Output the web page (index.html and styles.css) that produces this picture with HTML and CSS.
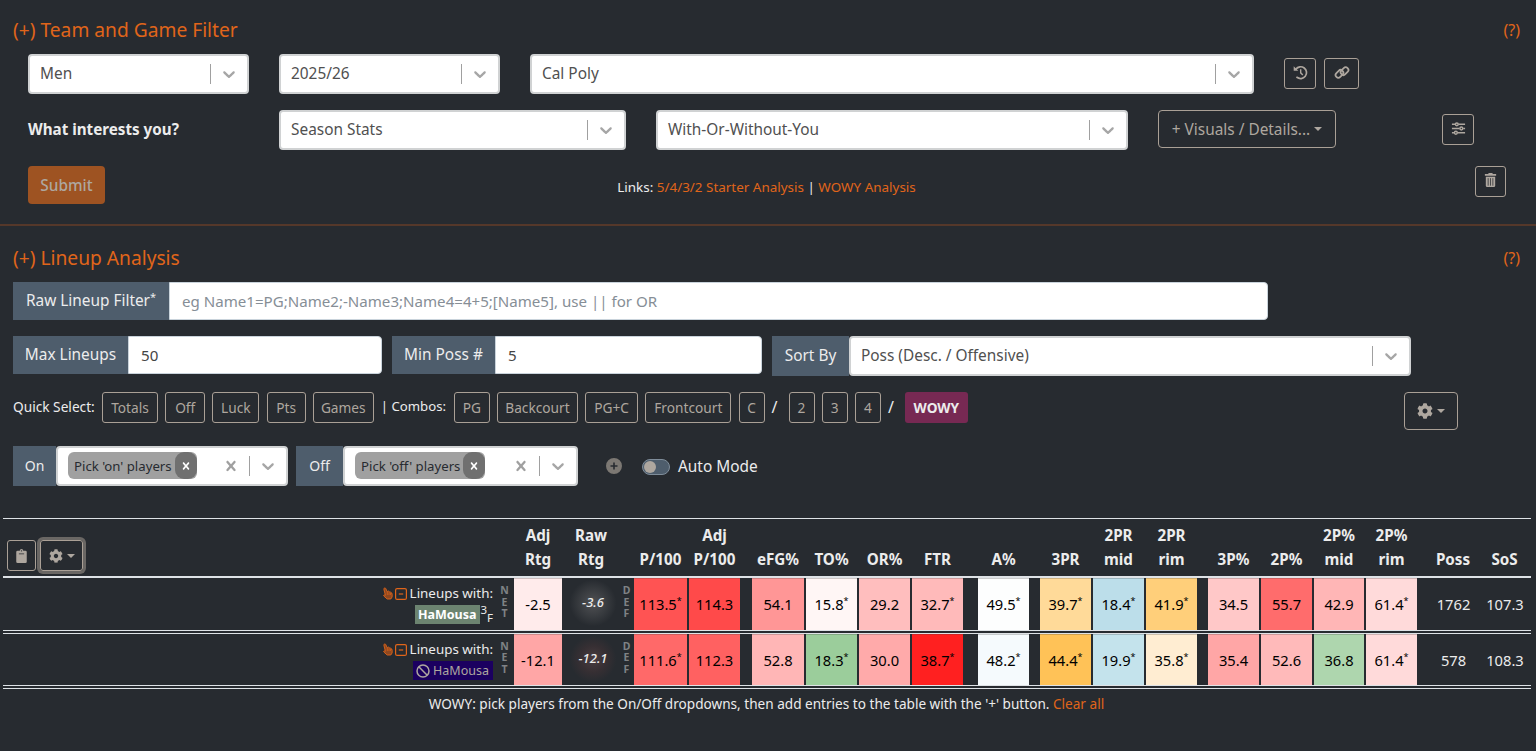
FILE: index.html
```html
<!DOCTYPE html>
<html lang="en">
<head>
  <meta charset="UTF-8" />
  <title>Lineup Analysis</title>
  <meta name="viewport" content="width=device-width, initial-scale=1.0" />
  <link rel="stylesheet" href="styles.css">
</head>
<body>
  <svg class="sprite" aria-hidden="true">
    <symbol id="chevron" viewBox="0 0 20 20"><path d="M4.516 7.548c0.436-0.446 1.043-0.481 1.576 0l3.908 3.747 3.908-3.747c0.533-0.481 1.141-0.446 1.574 0 0.436 0.445 0.408 1.197 0 1.615-0.406 0.418-4.695 4.502-4.695 4.502-0.217 0.223-0.502 0.335-0.787 0.335s-0.57-0.112-0.789-0.335c0 0-4.287-4.084-4.695-4.502s-0.436-1.17 0-1.615z"/></symbol>
    <symbol id="cross" viewBox="0 0 20 20"><path d="M14.348 14.849c-0.469 0.469-1.229 0.469-1.697 0l-2.651-3.030-2.651 3.029c-0.469 0.469-1.229 0.469-1.697 0-0.469-0.469-0.469-1.229 0-1.697l2.758-3.15-2.759-3.152c-0.469-0.469-0.469-1.228 0-1.697s1.228-0.469 1.697 0l2.652 3.031 2.651-3.031c0.469-0.469 1.228-0.469 1.697 0s0.469 1.229 0 1.697l-2.758 3.152 2.758 3.15c0.469 0.469 0.469 1.229 0 1.698z"/></symbol>
    <symbol id="gear" viewBox="0 0 512 512"><path d="M487.4 315.7l-42.6-24.6c4.3-23.2 4.3-47 0-70.2l42.6-24.6c4.9-2.8 7.1-8.6 5.5-14-11.1-35.6-30-67.8-54.7-94.6-3.8-4.1-10-5.1-14.8-2.3L380.8 110c-17.9-15.4-38.5-27.3-60.8-35.1V25.8c0-5.6-3.9-10.5-9.4-11.7-36.7-8.2-74.3-7.8-109.2 0-5.5 1.2-9.4 6.1-9.4 11.7V75c-22.2 7.9-42.8 19.8-60.8 35.1L88.7 85.5c-4.9-2.8-11-1.9-14.8 2.3-24.7 26.7-43.6 58.9-54.7 94.6-1.7 5.4.6 11.2 5.5 14L67.3 221c-4.3 23.2-4.3 47 0 70.2l-42.6 24.6c-4.9 2.8-7.1 8.6-5.5 14 11.1 35.6 30 67.8 54.7 94.6 3.8 4.1 10 5.1 14.8 2.3l42.6-24.6c17.9 15.4 38.5 27.3 60.8 35.1v49.2c0 5.6 3.9 10.5 9.4 11.7 36.7 8.2 74.3 7.8 109.2 0 5.5-1.2 9.4-6.1 9.4-11.7v-49.2c22.2-7.9 42.8-19.8 60.8-35.1l42.6 24.6c4.9 2.8 11 1.9 14.8-2.3 24.7-26.7 43.6-58.9 54.7-94.6 1.5-5.5-.7-11.3-5.6-14.1zM256 336c-44.1 0-80-35.9-80-80s35.9-80 80-80 80 35.9 80 80-35.9 80-80 80z"/></symbol>
    <symbol id="history" viewBox="0 0 16 16"><path d="M3.1 4.4A6.3 6.3 0 1 1 4.2 13.1" fill="none" stroke="currentColor" stroke-width="1.8" stroke-linecap="round"/><path d="M.7 1.3v4.9h4.9z"/><path d="M8.2 4.6v3.8l2.3 2.2" fill="none" stroke="currentColor" stroke-width="1.5"/></symbol>
    <symbol id="link" viewBox="0 0 18 16"><g fill="none" stroke="currentColor" stroke-width="1.9"><rect x="-4.6" y="-2.9" width="9.2" height="5.8" rx="2.9" transform="translate(6.3 9.4) rotate(-45)"/><rect x="-4.6" y="-2.9" width="9.2" height="5.8" rx="2.9" transform="translate(11.700 6.600) rotate(-45)"/></g></symbol>
    <symbol id="sliders" viewBox="0 0 16 14"><g fill="none" stroke="currentColor" stroke-width="1.6"><path d="M1 2.5h3.500M8 2.500h7M1 7h8M13 7h2M1 11.500h2.500M7 11.500h8"/><circle cx="6.200" cy="2.500" r="1.500"/><circle cx="11" cy="7" r="1.500"/><circle cx="5.200" cy="11.500" r="1.500"/></g></symbol>
    <symbol id="trash" viewBox="0 0 14 16"><path d="M4.500 1l.6-1h3.800l.6 1H13v2H1V1zM2 4h10v9.500a1.500 1.500 0 0 1-1.500 1.500h-7A1.500 1.500 0 0 1 2 13.500z"/><path d="M4.500 5.500v8M7 5.500v8M9.500 5.500v8" stroke="#272b30" stroke-width=".8"/></symbol>
    <symbol id="clipboard" viewBox="0 0 12 16"><path fill-rule="evenodd" d="M1.500 2H4a2 2 0 0 1 4 0h2.500A1.500 1.500 0 0 1 12 3.500v11a1.500 1.500 0 0 1-1.500 1.500h-9A1.500 1.500 0 0 1 0 14.500v-11A1.500 1.500 0 0 1 1.500 2zM6 1.300a.8.8 0 1 0 0 1.600.8.8 0 0 0 0-1.600zM3 5v1h6V5z"/></symbol>
    <symbol id="hand" viewBox="0 0 10 13"><path d="M1.200 1.200c.6-.5 1.200-.3 1.500.3l1.600 3.300 1-.8 1 .9.900-.2.700 1 .800.200.500 1.500-.1 2.600-1.300 2H4.200L.9 9.100C.4 8.400.8 7.700 1.500 7.900l.9.400L.9 2.400c-.1-.5 0-.9.300-1.200z" fill="#8f4820" stroke="currentColor" stroke-width=".9"/><path d="M4.300 5v3M6 5.500v2.500M7.600 6v2" stroke="currentColor" stroke-width=".7"/></symbol>
    <symbol id="minus-box" viewBox="0 0 12 12"><rect x=".6" y=".6" width="10.800" height="10.800" rx="1.500" fill="none" stroke="currentColor" stroke-width="1.200"/><path d="M3.800 5.400h4.400v1.200H3.800z"/></symbol>
    <symbol id="ban" viewBox="0 0 14 14"><g fill="none" stroke="currentColor" stroke-width="1.500"><circle cx="7" cy="7" r="6"/><path d="M2.800 2.800l8.400 8.400"/></g></symbol>
    <symbol id="plus-circle" viewBox="0 0 16 16"><path fill-rule="evenodd" d="M8 0a8 8 0 1 0 0 16A8 8 0 0 0 8 0zM7.200 4.500h1.600v2.700h2.700v1.600H8.800v2.700H7.200V8.800H4.500V7.200h2.700z"/></symbol>
  </svg>

  <section class="panel filters">
    <div class="panel-head">
      <h2>(+) Team and Game Filter</h2>
      <a class="help">(?)</a>
    </div>

    <div class="filter-row">
      <div class="select w-year"><span class="value">Men</span><span class="arrow"><svg><use href="#chevron"/></svg></span></div>
      <div class="select w-year"><span class="value">2025/26</span><span class="arrow"><svg><use href="#chevron"/></svg></span></div>
      <div class="select w-team"><span class="value">Cal Poly</span><span class="arrow"><svg><use href="#chevron"/></svg></span></div>
      <div class="icon-pair">
        <button class="btn icon-btn"><svg><use href="#history"/></svg></button>
        <button class="btn icon-btn link-btn"><svg><use href="#link"/></svg></button>
      </div>
    </div>

    <div class="filter-row">
      <strong class="question">What interests you?</strong>
      <div class="select w-stats"><span class="value">Season Stats</span><span class="arrow"><svg><use href="#chevron"/></svg></span></div>
      <div class="select w-wowy"><span class="value">With-Or-Without-You</span><span class="arrow"><svg><use href="#chevron"/></svg></span></div>
      <button class="btn visuals">+ Visuals / Details...<i class="caret"></i></button>
      <button class="btn icon-btn sliders"><svg><use href="#sliders"/></svg></button>
    </div>

    <div class="filter-row submit-row">
      <button class="submit">Submit</button>
      <div class="links">Links: <a>5/4/3/2 Starter Analysis</a> | <a>WOWY Analysis</a></div>
      <button class="btn icon-btn trash"><svg><use href="#trash"/></svg></button>
    </div>
  </section>

  <section class="panel lineups">
    <div class="panel-head">
      <h2>(+) Lineup Analysis</h2>
      <a class="help">(?)</a>
    </div>

    <div class="group raw-filter">
      <label for="rawFilter">Raw Lineup Filter<sup>*</sup></label>
      <input type="text" id="rawFilter" placeholder="eg Name1=PG;Name2;-Name3;Name4=4+5;[Name5], use || for OR">
    </div>

    <div class="group-row">
      <div class="group max-lineups">
        <label for="maxLineups">Max Lineups</label>
        <input type="text" id="maxLineups" value="50">
      </div>
      <div class="group min-poss">
        <label for="minPoss">Min Poss #</label>
        <input type="text" id="minPoss" value="5">
      </div>
      <div class="group sort-by">
        <label>Sort By</label>
        <div class="select"><span class="value">Poss (Desc. / Offensive)</span><span class="arrow"><svg><use href="#chevron"/></svg></span></div>
      </div>
    </div>

    <div class="quick-row">
      <span class="quick-label">Quick Select:</span>
      <div class="chips">
        <button class="btn w56">Totals</button>
        <button class="btn w40">Off</button>
        <button class="btn w47">Luck</button>
        <button class="btn w39">Pts</button>
        <button class="btn w61">Games</button>
      </div>
      <span class="combo-label">| Combos:</span>
      <div class="chips">
        <button class="btn w36">PG</button>
        <button class="btn w81">Backcourt</button>
        <button class="btn w53">PG+C</button>
        <button class="btn w86">Frontcourt</button>
        <button class="btn w26">C</button>
      </div>
      <span class="slash">/</span>
      <div class="chips">
        <button class="btn w26">2</button>
        <button class="btn w26">3</button>
        <button class="btn w26">4</button>
      </div>
      <span class="slash">/</span>
      <button class="wowy">WOWY</button>
      <button class="btn gear-btn"><svg><use href="#gear"/></svg><i class="caret"></i></button>
    </div>

    <div class="onoff-row">
      <div class="group on-group">
        <label>On</label>
        <div class="select"><span class="pill">Pick 'on' players<b><svg><use href="#cross"/></svg></b></span><svg class="clear"><use href="#cross"/></svg><span class="arrow"><svg><use href="#chevron"/></svg></span></div>
      </div>
      <div class="group off-group">
        <label>Off</label>
        <div class="select"><span class="pill">Pick 'off' players<b><svg><use href="#cross"/></svg></b></span><svg class="clear"><use href="#cross"/></svg><span class="arrow"><svg><use href="#chevron"/></svg></span></div>
      </div>
      <svg class="add"><use href="#plus-circle"/></svg>
      <span class="switch"></span>
      <span class="auto">Auto Mode</span>
    </div>
  </section>

  <table class="stats">
    <colgroup>
      <col class="c-title"><col class="c-net"><col class="c-adj"><col class="c-raw"><col class="c-def">
      <col class="c-p100"><col class="c-num"><col class="c-gap10">
      <col class="c-efg"><col class="c-num"><col class="c-num"><col class="c-num"><col class="c-gap13">
      <col class="c-num"><col class="c-gap9">
      <col class="c-num"><col class="c-num"><col class="c-num"><col class="c-gap9">
      <col class="c-num"><col class="c-num"><col class="c-mid"><col class="c-num"><col class="c-gap9">
      <col class="c-poss"><col class="c-sos">
    </colgroup>
    <thead>
      <tr>
        <th class="tools">
          <div>
            <button class="btn clip"><svg><use href="#clipboard"/></svg></button>
            <button class="btn table-gear"><svg><use href="#gear"/></svg><i class="caret"></i></button>
          </div>
        </th>
        <th></th>
        <th>Adj<br>Rtg</th>
        <th>Raw<br>Rtg</th>
        <th></th>
        <th>P/100</th>
        <th>Adj<br>P/100</th>
        <th></th>
        <th>eFG%</th>
        <th>TO%</th>
        <th>OR%</th>
        <th>FTR</th>
        <th></th>
        <th>A%</th>
        <th></th>
        <th>3PR</th>
        <th>2PR<br>mid</th>
        <th>2PR<br>rim</th>
        <th></th>
        <th>3P%</th>
        <th>2P%</th>
        <th>2P%<br>mid</th>
        <th>2P%<br>rim</th>
        <th></th>
        <th>Poss</th>
        <th>SoS</th>
      </tr>
    </thead>
    <tbody>
      <tr class="on-line">
        <td class="title">
          <div><svg class="hand"><use href="#hand"/></svg><svg class="box"><use href="#minus-box"/></svg>Lineups with:</div>
          <div><span class="badge on">HaMousa</span><sup>3</sup><sub>F</sub></div>
        </td>
        <td class="vert">N<br>E<br>T</td>
        <td class="stat" style="background:#ffebeb">-2.5</td>
        <td class="raw"><span>-3.6</span></td>
        <td class="vert">D<br>E<br>F</td>
        <td class="stat" style="background:#ff5353">113.5<sup>*</sup></td>
        <td class="stat" style="background:#ff4a4a">114.3</td>
        <td></td>
        <td class="stat" style="background:#ff9696">54.1</td>
        <td class="stat" style="background:#fff6f5">15.8<sup>*</sup></td>
        <td class="stat" style="background:#ffbebe">29.2</td>
        <td class="stat" style="background:#ffbaba">32.7<sup>*</sup></td>
        <td></td>
        <td class="stat" style="background:#fdfefe">49.5<sup>*</sup></td>
        <td></td>
        <td class="stat" style="background:#ffda99">39.7<sup>*</sup></td>
        <td class="stat" style="background:#bcdeea">18.4<sup>*</sup></td>
        <td class="stat" style="background:#ffcf7a">41.9<sup>*</sup></td>
        <td></td>
        <td class="stat" style="background:#ffc8c8">34.5</td>
        <td class="stat" style="background:#ff6c6c">55.7</td>
        <td class="stat" style="background:#ffb6b6">42.9</td>
        <td class="stat" style="background:#ffdada">61.4<sup>*</sup></td>
        <td></td>
        <td class="plain">1762</td>
        <td class="plain">107.3</td>
      </tr>
      <tr class="rule"><td colspan="26"></td></tr>
      <tr class="off-line">
        <td class="title">
          <div><svg class="hand"><use href="#hand"/></svg><svg class="box"><use href="#minus-box"/></svg>Lineups with:</div>
          <div><span class="badge off"><svg><use href="#ban"/></svg>HaMousa</span></div>
        </td>
        <td class="vert">N<br>E<br>T</td>
        <td class="stat" style="background:#ffa6a6">-12.1</td>
        <td class="raw low"><span>-12.1</span></td>
        <td class="vert">D<br>E<br>F</td>
        <td class="stat" style="background:#ff6969">111.6<sup>*</sup></td>
        <td class="stat" style="background:#ff6161">112.3</td>
        <td></td>
        <td class="stat" style="background:#ffb6b6">52.8</td>
        <td class="stat" style="background:#9bcd9b">18.3<sup>*</sup></td>
        <td class="stat" style="background:#ffaaaa">30.0</td>
        <td class="stat" style="background:#ff2020">38.7<sup>*</sup></td>
        <td></td>
        <td class="stat" style="background:#f5fafd">48.2<sup>*</sup></td>
        <td></td>
        <td class="stat" style="background:#ffc257">44.4<sup>*</sup></td>
        <td class="stat" style="background:#c4e3ec">19.9<sup>*</sup></td>
        <td class="stat" style="background:#ffedd2">35.8<sup>*</sup></td>
        <td></td>
        <td class="stat" style="background:#ffa6a6">35.4</td>
        <td class="stat" style="background:#ffbaba">52.6</td>
        <td class="stat" style="background:#aed6ae">36.8</td>
        <td class="stat" style="background:#ffdada">61.4<sup>*</sup></td>
        <td></td>
        <td class="plain">578</td>
        <td class="plain">108.3</td>
      </tr>
      <tr class="rule"><td colspan="26"></td></tr>
    </tbody>
  </table>
  <p class="note">WOWY: pick players from the On/Off dropdowns, then add entries to the table with the '+' button. <a>Clear all</a></p>
</body>
</html>
```
FILE: styles.css
```css
* {
  box-sizing: border-box;
}

body {
  margin: 0;
  height: 751px;
  overflow: hidden;
  background: #272b30;
  color: #ececec;
  font-family: "Noto Sans", "Open Sans", sans-serif;
  font-size: 15.4px;
  line-height: 24px;
}

.sprite {
  display: none;
}

svg {
  fill: currentColor;
  flex: none;
}

button, input {
  font-family: inherit;
  font-size: inherit;
  margin: 0;
}

a {
  color: #e0651a;
}

.panel-head {
  display: flex;
  justify-content: space-between;
  align-items: center;
  height: 24px;
}

h2 {
  margin: 0;
  font-size: 19.2px;
  font-weight: 400;
  color: #e0651a;
}

.help {
  font-size: 16px;
}

/* filter panel */

.filters {
  height: 226px;
  padding: 18px 16px 0 13px;
  border-bottom: 2px solid #55382a;
}

.filter-row {
  display: flex;
  gap: 30px;
  height: 40px;
  margin: 12px 0 16px 15px;
}

.filter-row + .filter-row {
  margin-top: 0;
}

.select {
  display: flex;
  align-items: center;
  height: 40px;
  padding-left: 10px;
  background: #fff;
  border: 2px solid #d0d2d3;
  border-radius: 4px;
  color: #505050;
}

.select .value {
  flex: 1;
}

.arrow {
  width: 37px;
  height: 20px;
  border-left: 1px solid #a0a0a0;
  color: #a6a6a6;
  display: flex;
  justify-content: center;
}

.arrow svg, .clear {
  width: 20px;
  height: 20px;
}

.w-year {
  width: 221px;
}

.w-team {
  width: 724px;
}

.w-stats {
  width: 347px;
}

.w-wowy {
  width: 472px;
}

.btn {
  display: flex;
  align-items: center;
  justify-content: center;
  height: 31px;
  padding: 0;
  background: none;
  border: 1px solid #aaa096;
  border-radius: 3px;
  color: #aea79f;
}

.icon-pair {
  display: flex;
  gap: 8px;
  padding-top: 4px;
}

.icon-btn {
  width: 32px;
  padding-bottom: 3px;
}

.icon-btn svg {
  width: 15px;
  height: 15px;
}

.link-btn {
  width: 35px;
}

.link-btn svg {
  width: 18px;
}

.question {
  width: 221px;
  padding-top: 7px;
  font-size: 15.2px;
}

.visuals {
  width: 178px;
  height: 38px;
  border-radius: 4px;
}

.caret {
  margin-left: 4px;
  border: 4px solid transparent;
  border-top-color: currentColor;
  border-bottom: 0;
}

.sliders {
  margin: 4px 0 0 76px;
}

.submit-row {
  gap: 0;
}

.submit {
  width: 77px;
  height: 38px;
  padding: 0;
  border: 0;
  border-radius: 4px;
  background: #9e5322;
  color: #aea79f;
  font-weight: 500;
}

.links {
  flex: 1;
  margin-top: 9px;
  padding-right: 47px;
  text-align: center;
  font-size: 13.45px;
}

.trash {
  width: 31px;
  margin-right: 14px;
}

/* lineup panel */

.lineups {
  padding: 20px 16px 0 13px;
  height: 292px;
}

.group {
  display: flex;
  height: 38px;
}

.group label {
  display: flex;
  align-items: center;
  justify-content: center;
  flex: none;
  background: #4e5d6c;
}

.group label sup {
  font-size: 11px;
  margin-top: -8px;
}

.group input {
  flex: 1;
  min-width: 0;
  padding: 0 12px;
  border: 1px solid #c9d3db;
  border-radius: 0 4px 4px 0;
  background: #fff;
  color: #444;
  font-size: 15.1px;
}

.group input::placeholder {
  color: #868e96;
  opacity: 1;
}

.group .select {
  flex: 1;
}

.raw-filter {
  width: 1255px;
  margin: 12px 0 16px;
}

.raw-filter label {
  width: 156px;
}

.group-row {
  display: flex;
  gap: 10px;
}

.max-lineups {
  width: 369px;
}

.max-lineups label {
  width: 115px;
}

.min-poss {
  width: 370px;
}

.min-poss label {
  width: 103px;
}

.sort-by {
  width: 639px;
  height: 40px;
}

.sort-by label {
  width: 77px;
}

.quick-row {
  display: flex;
  margin-top: 16px;
  height: 38px;
  font-size: 13.7px;
}

.quick-row .btn {
  padding-bottom: 1px;
}

.quick-label {
  width: 89px;
  padding-top: 3px;
  white-space: nowrap;
}

.combo-label {
  width: 80px;
  padding: 2px 0 0 7px;
  font-size: 13.2px;
  white-space: nowrap;
}

.chips {
  display: flex;
  gap: 7.2px;
}

.slash {
  width: 24px;
  padding: 3px 0 0 7px;
  font-size: 16px;
}

.w26 { width: 26px; }
.w36 { width: 36px; }
.w39 { width: 39px; }
.w40 { width: 40px; }
.w47 { width: 47px; }
.w53 { width: 53px; }
.w56 { width: 56px; }
.w61 { width: 61px; }
.w81 { width: 81px; }
.w86 { width: 86px; }

.wowy {
  width: 63px;
  height: 31px;
  padding: 0;
  border: 0;
  border-radius: 3px;
  background: #772953;
  color: #ececec;
  font-weight: 700;
}

.gear-btn {
  width: 54px;
  height: 38px;
  margin: 0 62px 0 auto;
  border-radius: 4px;
}

.gear-btn svg {
  width: 16px;
  height: 16px;
}

.onoff-row {
  display: flex;
  margin-top: 16px;
}

.onoff-row .group {
  height: 40px;
}

.on-group {
  width: 275px;
  margin-right: 8px;
}

.on-group label {
  width: 43px;
}

.off-group {
  width: 282px;
}

.off-group label {
  width: 47px;
}

.onoff-row label {
  font-size: 14px;
}

.pill {
  display: flex;
  align-items: center;
  height: 27px;
  margin-top: -1px;
  padding-left: 6px;
  border-radius: 6px;
  background: #a0a0a0;
  color: #272b30;
  font-size: 13.2px;
  white-space: nowrap;
}

.pill b {
  display: flex;
  align-items: center;
  justify-content: center;
  width: 22px;
  height: 27px;
  margin-left: 3px;
  border-radius: 9px;
  background: #707070;
  color: #fff;
}

.pill svg {
  width: 14px;
  height: 14px;
}

.clear {
  margin: 0 8px 0 auto;
  color: #a0a0a0;
}

.add {
  width: 16px;
  height: 16px;
  margin: 12px 20px 0 28px;
  color: #7c7873;
}

.switch {
  width: 28px;
  height: 16px;
  margin: 13px 8px 0 0;
  padding: 1px;
  border: 1px solid #7f8d9a;
  border-radius: 8px;
  background: #4e5d6c;
}

.switch::before {
  content: "";
  display: block;
  width: 12px;
  height: 12px;
  border-radius: 50%;
  background: #aea79f;
}

.auto {
  margin-top: 9px;
}

/* stats table */

.stats {
  width: 1528px;
  margin-left: 3px;
  table-layout: fixed;
  border-collapse: separate;
  border-spacing: 0;
  border-top: 1px solid #dee2e6;
  text-align: center;
}

.c-title { width: 493px; }
.c-net { width: 18px; }
.c-adj { width: 50px; }
.c-raw { width: 56px; }
.c-def { width: 14px; }
.c-p100 { width: 55px; }
.c-num { width: 53px; }
.c-efg { width: 54px; }
.c-mid { width: 52px; }
.c-gap10 { width: 10px; }
.c-gap13 { width: 13px; }
.c-gap9 { width: 9px; }
.c-poss { width: 52px; }
.c-sos { width: 51px; }

.stats th {
  height: 59px;
  padding: 0 2px 5px 0;
  vertical-align: bottom;
  border-bottom: 2px solid #dee2e6;
  font-size: 15.2px;
  font-weight: 700;
  white-space: nowrap;
}

.stats .tools {
  vertical-align: top;
  padding: 21px 0 0 4px;
}

.tools div {
  display: flex;
  gap: 4px;
}

.clip {
  width: 29px;
}

.clip svg {
  width: 11px;
  height: 14px;
}

.table-gear {
  width: 43px;
  box-shadow: 0 0 0 3px #6a6764;
}

.table-gear svg {
  width: 14px;
  height: 14px;
}

.stats td {
  padding: 0;
}

.on-line td {
  height: 52px;
}

.off-line td {
  height: 51px;
}

.stats .stat {
  color: #000;
  border-right: 2px solid #272b30;
  box-shadow: inset 0 1px rgba(60, 60, 60, 0.25);
}

.stat, .plain {
  font-size: 14.7px;
}

.stats .plain {
  padding-right: 1px;
}

.stat sup {
  font-size: 9px;
  line-height: 0;
}

.stats .title {
  text-align: right;
  padding-right: 3px;
  font-size: 13.4px;
  line-height: 21px;
  vertical-align: top;
  padding-top: 5px;
}

.title div {
  display: flex;
  justify-content: flex-end;
  align-items: center;
  height: 21px;
}

.hand {
  width: 10px;
  height: 13px;
  color: #e0651a;
}

.box {
  width: 12px;
  height: 12px;
  margin: 0 3px 0 2px;
  color: #e0651a;
}

.badge {
  display: flex;
  align-items: center;
  height: 19px;
  padding: 0 4px 0 3px;
  font-size: 12.5px;
}

.badge.on {
  background: #6c8470;
  color: #fff;
  font-weight: 700;
}

.badge.off {
  background: #1b0060;
  color: #aea79f;
}

.badge svg {
  width: 14px;
  height: 14px;
  margin-right: 3px;
}

.title sup {
  font-size: 11.5px;
  margin-top: -11px;
}

.title sub {
  font-size: 11.5px;
  margin-top: 6px;
}

.vert {
  color: #7f8285;
  font-size: 10.5px;
  font-weight: 700;
  line-height: 11.5px;
}

.stats .vert {
  padding: 0 1px 3px 0;
}

.raw span {
  display: block;
  height: 48px;
  line-height: 46px;
  margin: 0 -2px 2px 0;
  font-size: 13px;
  font-style: italic;
  font-weight: 500;
  background: radial-gradient(circle, #505154 0%, #393c40 35%, transparent 62%);
}

.raw.low span {
  background: radial-gradient(circle, #4a3d40 0%, #362f33 35%, transparent 62%);
}

.stats .rule td {
  height: 4px;
  line-height: 0;
  border-top: 1px solid #dee2e6;
  border-bottom: 1px solid #dee2e6;
}

.note {
  margin: 3px 0 0;
  padding-right: 3px;
  text-align: center;
  font-size: 13.6px;
}
```
